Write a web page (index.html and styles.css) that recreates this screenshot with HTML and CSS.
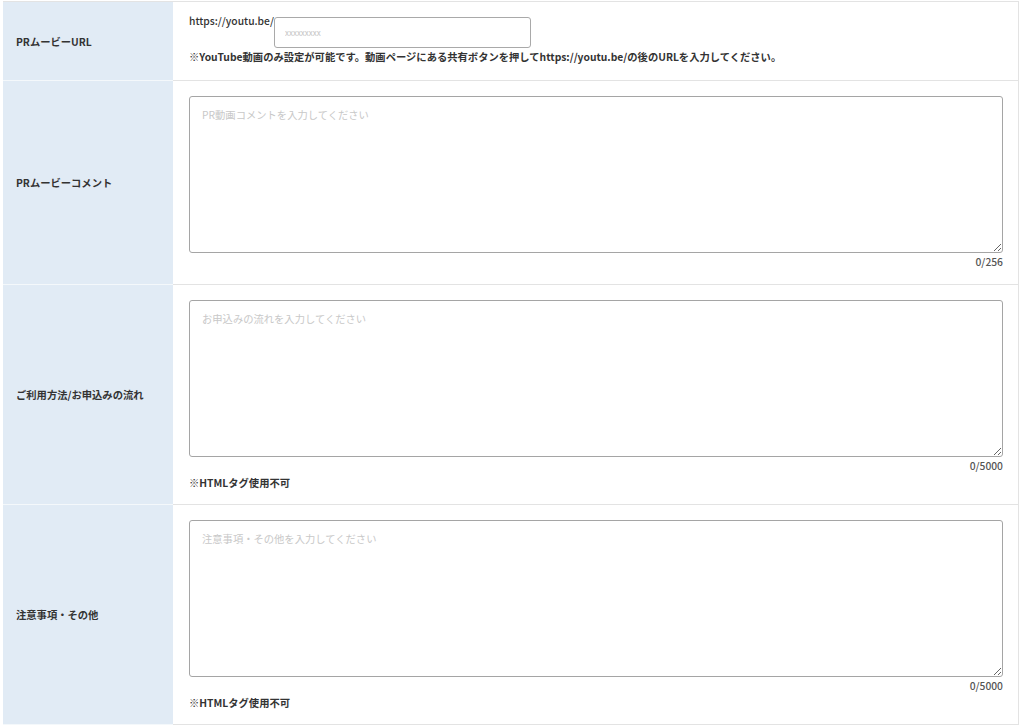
FILE: index.html
```html
<!DOCTYPE html>
<html lang="ja">
<head>
<meta charset="utf-8">
<title>form</title>
<link rel="stylesheet" href="styles.css">
</head>
<body>
<div class="form">
  <div class="row row-url">
    <div class="label">PRムービーURL</div>
    <div class="value">
      <div class="url-line">
        <span class="prefix">https://youtu.be/</span>
        <input class="url-input" type="text" placeholder="xxxxxxxxx">
      </div>
      <p class="note">※YouTube動画のみ設定が可能です。動画ページにある共有ボタンを押してhttps://youtu.be/の後のURLを入力してください。</p>
    </div>
  </div>
  <div class="row row-plain">
    <div class="label">PRムービーコメント</div>
    <div class="value">
      <textarea class="area" placeholder="PR動画コメントを入力してください"></textarea>
      <div class="count">0/256</div>
    </div>
  </div>
  <div class="row">
    <div class="label">ご利用方法/お申込みの流れ</div>
    <div class="value">
      <textarea class="area" placeholder="お申込みの流れを入力してください"></textarea>
      <div class="count">0/5000</div>
      <p class="note note-html">※HTMLタグ使用不可</p>
    </div>
  </div>
  <div class="row">
    <div class="label">注意事項・その他</div>
    <div class="value">
      <textarea class="area" placeholder="注意事項・その他を入力してください"></textarea>
      <div class="count">0/5000</div>
      <p class="note note-html">※HTMLタグ使用不可</p>
    </div>
  </div>
</div>
</body>
</html>
```
FILE: styles.css
```css
html, body {
  margin: 0;
  padding: 0;
  background: #ffffff;
}
body {
  font-family: "Noto Sans CJK JP", "Noto Sans", sans-serif;
  color: #333333;
  font-size: 10.3px;
}
.form {
  margin: 1px 5px 0 3px;
  border-top: 1px solid #e3e3e3;
}
.row {
  display: grid;
  grid-template-columns: 170px 1fr;
}
.label {
  background: #e1ebf5;
  display: flex;
  align-items: center;
  padding-left: 13px;
  font-weight: bold;
  font-size: 10.3px;
  color: #333;
  border-bottom: 1px solid #f4f8fb;
}
.value {
  padding: 15px 15px 14px 16px;
  border-right: 1px solid #e3e3e3;
  border-bottom: 1px solid #e3e3e3;
  display: flex;
  flex-direction: column;
}
.row-url .value {
  padding-top: 11px;
  padding-bottom: 16px;
}
.row-plain .value {
  padding-bottom: 15px;
}
.url-line {
  display: flex;
  align-items: flex-start;
}
.prefix {
  line-height: 16px;
  font-weight: 500;
}
.url-input {
  margin-top: 4px;
  width: 257px;
  height: 31px;
  box-sizing: border-box;
  border: 1px solid #a9a9a9;
  border-radius: 3px;
  padding: 0 10px;
  font-family: inherit;
  font-size: 8px;
  outline: none;
}
.url-input::placeholder {
  color: #c4c4c4;
}
.note {
  margin: 2px 0 0;
  line-height: 14px;
  font-weight: bold;
}
.note-html {
  margin-top: 3px;
}
.area {
  display: block;
  width: 100%;
  height: 157px;
  box-sizing: border-box;
  border: 1px solid #a5a5a5;
  border-radius: 3px;
  padding: 10px 12px;
  font-family: inherit;
  font-size: 10.3px;
  resize: vertical;
  outline: none;
}
.area::placeholder {
  color: #c8c8c8;
}
.count {
  margin-top: 2px;
  text-align: right;
  line-height: 14px;
  font-weight: 500;
  color: #555;
}
```
